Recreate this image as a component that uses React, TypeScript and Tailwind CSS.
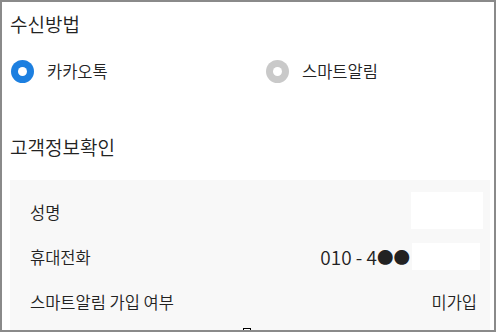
const Radio = ({ checked, label }: { checked: boolean; label: string }) => {
  return (
    <div className="flex items-center gap-[13px]">
      <span
        className={
          checked
            ? "flex h-[23px] w-[23px] items-center justify-center rounded-full bg-[#1c7fe0]"
            : "flex h-[23px] w-[23px] items-center justify-center rounded-full bg-[#c9c9c9]"
        }
      >
        <span className="h-[9px] w-[9px] rounded-full bg-white" />
      </span>
      <span className="text-[16.5px] leading-[24px]">{label}</span>
    </div>
  );
};

const App = () => {
  return (
    <div className="relative h-[332px] w-[496px] overflow-hidden border-2 border-[#8a8a8a] bg-white font-['Noto_Sans_CJK_KR',sans-serif] font-[350] text-[#222]">
      <div className="pl-[8px] pt-[8px]">
        <h2 className="h-[28px] text-[19px] leading-[28px] font-[350]">수신방법</h2>

        <div className="mt-[21px] flex h-[24px] items-center pl-[1px]">
          <div className="w-[255px]">
            <Radio checked label="카카오톡" />
          </div>
          <Radio checked={false} label="스마트알림" />
        </div>

        <h2 className="mt-[50px] h-[28px] text-[19px] leading-[28px] font-[350]">고객정보확인</h2>

        <div className="mt-[19px] mr-[4px] h-[200px] bg-[#f8f8f8] pt-[10px] pr-[13px] pl-[20px] text-[16.5px]">
          <div className="flex h-[45px] items-center justify-between">
            <span>성명</span>
            <span className="-mr-[6px] mt-[2px] h-[37px] w-[72px] self-start bg-white" />
          </div>
          <div className="flex h-[45px] items-center justify-between">
            <span>휴대전화</span>
            <div className="-mr-[3px] flex items-center gap-[2px]">
              <span className="flex items-center">
                <span className="text-[19px]">010 - 4</span>
                <span className="text-[16.5px]">●●</span>
              </span>
              <span className="-mt-[2px] h-[27px] w-[68px] bg-white" />
            </div>
          </div>
          <div className="flex h-[45px] items-center justify-between">
            <span>스마트알림 가입 여부</span>
            <span>미가입</span>
          </div>
        </div>
      </div>

      <span className="absolute bottom-[-2px] left-[241px] h-[4px] w-[8px] border border-black bg-white" />
    </div>
  );
};

export default App;
